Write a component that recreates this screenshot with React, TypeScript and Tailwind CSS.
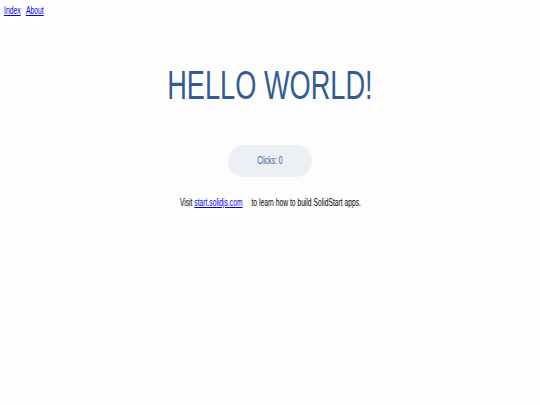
import { useState } from 'react';

export default function App() {
  const [count, setCount] = useState(0);

  return (
    <div className="min-h-[405px] w-full bg-[#fdfdfe] font-['Liberation_Sans',Arial,sans-serif] text-black">
      {/* Top nav */}
      <nav className="px-[4px] pt-[3px] text-[10.5px] leading-[14px]">
        <span className="inline-block origin-left scale-x-[0.65] whitespace-nowrap">
          <a href="#" className="mr-[8px] text-[#0000ee] underline">Index</a>
          <a href="#" className="text-[#0000ee] underline">About</a>
        </span>
      </nav>

      <main className="flex flex-col items-center">
        <h1 className="mt-[48px] text-[41px] font-normal leading-none text-[#335d92] uppercase whitespace-nowrap scale-x-[0.663]">
          Hello world!
        </h1>

        <button
          onClick={() => setCount(count + 1)}
          className="mt-[39px] flex h-[32px] w-[84px] items-center justify-center rounded-full bg-[#ecf0f5] text-[10.5px] text-[#335d92]"
        >
          <span className="inline-block whitespace-nowrap scale-x-[0.64]">Clicks: {count}</span>
        </button>

        <p className="mt-[18px] text-[10.5px] leading-[14px]">
          <span className="inline-block whitespace-nowrap scale-x-[0.64]">
            Visit <a href="#" className="text-[#0000ee] underline">start.solidjs.com</a>
            <span className="ml-[11px]"> to learn how to build SolidStart apps.</span>
          </span>
        </p>
      </main>
    </div>
  );
}
